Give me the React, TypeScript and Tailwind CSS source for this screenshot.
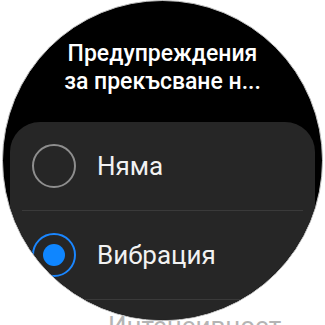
import { useState } from "react";

const options = ["Няма", "Вибрация"];

function Radio({ checked }: { checked: boolean }) {
  return (
    <div
      className={`w-[44px] h-[44px] rounded-full flex items-center justify-center flex-shrink-0 border-2 ${
        checked ? "border-[#1a86ff]" : "border-[#8e8e8e]"
      }`}
    >
      {checked && <div className="w-[22px] h-[22px] rounded-full bg-[#0f86ff]" />}
    </div>
  );
}

export default function App() {
  const [selected, setSelected] = useState(1);

  return (
    <div
      className="relative w-[325px] h-[325px] bg-white overflow-hidden"
      style={{ fontFamily: "Roboto, 'Noto Sans', sans-serif" }}
    >
      {/* next row peeking below the bezel */}
      <span className="absolute left-[108px] top-[313px] text-[26px] leading-[26px] text-[#b4b4b4] whitespace-nowrap">
        Интенсивност
      </span>

      <div className="relative w-[321px] h-[321px] ml-[2px] rounded-full bg-black border-[1.5px] border-[#c2c2c2] overflow-hidden">
        <div className="pt-[39px] text-center text-white text-[23px] leading-[28px] font-medium">
          <div>Предупреждения</div>
          <div>за прекъсване н...</div>
        </div>

        <div className="mt-[26px] mx-[7px] rounded-[30px] bg-[#262626] pb-[40px]">
          {options.map((label, i) => (
            <div key={label}>
              <button
                onClick={() => setSelected(i)}
                className="w-full h-[88px] flex items-center pl-[22px] gap-[21px] text-left"
              >
                <Radio checked={selected === i} />
                <span className="text-[26px] text-[#f2f2f2]">{label}</span>
              </button>
              <div className="mx-3 h-px bg-[#3a3a3a]" />
            </div>
          ))}
        </div>
      </div>
    </div>
  );
}
